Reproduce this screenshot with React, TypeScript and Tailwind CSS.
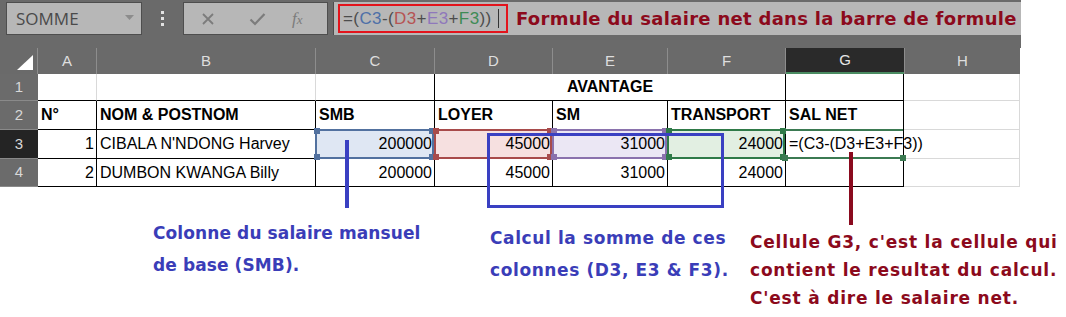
import React from "react";

const comic = "font-['DejaVu_Sans',sans-serif] font-bold whitespace-nowrap";

function Handles({ bg }: { bg: string }) {
  return (
    <>
      <span className={`absolute -left-[3px] -top-[3px] h-[6px] w-[6px] ${bg}`} />
      <span className={`absolute -right-[3px] -top-[3px] h-[6px] w-[6px] ${bg}`} />
      <span className={`absolute -left-[3px] -bottom-[3px] h-[6px] w-[6px] ${bg}`} />
      <span className={`absolute -right-[3px] -bottom-[3px] h-[6px] w-[6px] ${bg}`} />
    </>
  );
}

function ColHead({ label, last }: { label: string; last?: boolean }) {
  return (
    <div
      className={`flex items-center justify-center text-[15px] text-[#dedede] ${
        last ? "" : "border-r border-[#8d8d8d]"
      }`}
    >
      {label}
    </div>
  );
}

function RowHead({ label, active }: { label: string; active?: boolean }) {
  return (
    <div
      className={`flex items-center justify-center border-b border-[#8a8a8a] text-[15px] text-[#d8d8d8] ${
        active ? "bg-[#242424]" : "bg-[#6b6b6b]"
      }`}
    >
      {label}
    </div>
  );
}

const blk = "border-r border-b border-black";
const num = "flex items-center justify-end pr-[2px] whitespace-nowrap";
const txt = "flex items-center pl-[3px] whitespace-nowrap";

export default function App() {
  return (
    <div className="relative h-[317px] w-[1066px] overflow-hidden bg-white font-['Liberation_Sans',Arial,sans-serif] text-black">
      {/* Top gray zone */}
      <div className="w-[1021px] bg-[#6a6a6a]">
        {/* Toolbar */}
        <div className="flex h-[48px] items-start pt-[2px]">
          <div className="relative ml-[6px] flex h-[33px] w-[136px] items-center border border-[#4e4e4e] bg-[#b7b7b7] pl-[9px] font-['Open_Sans',sans-serif] text-[17px] text-[#4a4a4a]">
            SOMME
            <svg className="absolute left-[118px] top-[12px]" width="9" height="6" viewBox="0 0 9 6">
              <polygon points="0,0 9,0 4.5,5" fill="#8c8c8c" />
            </svg>
          </div>
          <div className="flex h-[33px] w-[41px] flex-col items-center justify-center gap-[3px]">
            <span className="h-[3px] w-[3px] bg-[#e2e2e2]" />
            <span className="h-[3px] w-[3px] bg-[#e2e2e2]" />
            <span className="h-[3px] w-[3px] bg-[#e2e2e2]" />
          </div>
          <div className="flex h-[33px] w-[145px] items-center border border-[#4e4e4e] bg-[#b7b7b7]">
            <svg className="ml-[17px]" width="14" height="14" viewBox="0 0 14 14">
              <path d="M2 2 L12 12 M12 2 L2 12" stroke="#7c7c7c" strokeWidth="1.8" />
            </svg>
            <svg className="ml-[34px]" width="17" height="14" viewBox="0 0 17 14">
              <path d="M1.5 7.5 L6 12 L15.5 2" stroke="#7c7c7c" strokeWidth="2.2" fill="none" />
            </svg>
            <span className="ml-[26px] font-['Liberation_Serif',serif] text-[17px] italic text-[#7c7c7c]">
              f<span className="text-[13px]">x</span>
            </span>
          </div>
          <div className="ml-[5px] flex h-[33px] w-[688px] items-center border-l border-[#4e4e4e] bg-[#b7b7b7]">
            <div className="ml-[4px] flex h-[29px] w-[170px] items-center border-2 border-[#e3141c] pl-[3px] text-[17px] tracking-[0.4px] text-[#4c4c4c]">
              <span>=(</span>
              <span className="text-[#4e70a8]">C3</span>
              <span>-(</span>
              <span className="text-[#b65353]">D3</span>
              <span>+</span>
              <span className="text-[#8f78bb]">E3</span>
              <span>+</span>
              <span className="text-[#3e8b55]">F3</span>
              <span>))</span>
              <span className="ml-[6px] h-[19px] w-[1px] bg-[#333]" />
            </div>
            <span className={`${comic} ml-[8px] text-[18px] tracking-[0.3px] text-[#8c0a1c]`}>
              Formule du salaire net dans la barre de formule
            </span>
          </div>
        </div>
      </div>

      {/* Grid */}
      <div className="grid w-[1021px] grid-cols-[38px_59px_219px_119px_118px_115px_118px_118px_116px] grid-rows-[26px_27px_29px_29px_28px] text-[16px]">
        {/* Header row */}
        <div className="relative border-r border-[#8d8d8d] bg-[#6a6a6a]">
          <svg className="absolute left-[17px] top-[7px]" width="17" height="16" viewBox="0 0 17 16">
            <polygon points="16,0 16,15 0,15" fill="#ffffff" />
          </svg>
        </div>
        <div className="col-span-6 grid grid-cols-[59px_219px_119px_118px_115px_118px] bg-[#6a6a6a]">
          <ColHead label="A" />
          <ColHead label="B" />
          <ColHead label="C" />
          <ColHead label="D" />
          <ColHead label="E" />
          <ColHead label="F" />
        </div>
        <div className="flex items-center justify-center border-b-2 border-[#4a8c62] bg-[#2a2a2a] text-[15px] text-[#e6e6e6]">
          G
        </div>
        <div className="flex items-center justify-center border-l border-[#8d8d8d] bg-[#6a6a6a] text-[15px] text-[#dedede]">
          H
        </div>

        {/* Row 1 */}
        <RowHead label="1" />
        <div className="border-r border-b border-r-[#d9d9d9] border-b-black" />
        <div className="border-r border-b border-r-[#d9d9d9] border-b-black" />
        <div className={blk} />
        <div className={`${blk} col-span-3 flex items-center justify-center font-bold`}>AVANTAGE</div>
        <div className={blk} />
        <div className="border-r border-b border-[#d9d9d9]" />

        {/* Row 2 */}
        <RowHead label="2" />
        <div className={`${blk} ${txt} font-bold`}>N°</div>
        <div className={`${blk} ${txt} font-bold`}>NOM &amp; POSTNOM</div>
        <div className={`${blk} ${txt} font-bold`}>SMB</div>
        <div className={`${blk} ${txt} font-bold`}>LOYER</div>
        <div className={`${blk} ${txt} font-bold`}>SM</div>
        <div className={`${blk} ${txt} font-bold`}>TRANSPORT</div>
        <div className={`${blk} ${txt} font-bold`}>SAL NET</div>
        <div className="border-r border-b border-[#d9d9d9]" />

        {/* Row 3 */}
        <RowHead label="3" active />
        <div className={`${blk} ${num}`}>1</div>
        <div className={`${blk} ${txt}`}>CIBALA N'NDONG Harvey</div>
        <div className={`${blk} ${num} relative bg-[#dfe7f3]`}>
          <div className="absolute -left-[1px] -top-[1px] bottom-[-1px] right-0 border-2 border-[#52719f]">
            <Handles bg="bg-[#52719f]" />
          </div>
          <span className="relative">200000</span>
        </div>
        <div className={`${blk} ${num} relative bg-[#f6e0e0]`}>
          <div className="absolute -left-[1px] -top-[1px] bottom-[-1px] right-0 border-2 border-[#a84b4b]">
            <Handles bg="bg-[#a84b4b]" />
          </div>
          <span className="relative">45000</span>
        </div>
        <div className={`${blk} ${num} relative bg-[#ebe7f4]`}>
          <div className="absolute -left-[1px] -top-[1px] bottom-[-1px] right-0 border-2 border-[#8a72ad]">
            <Handles bg="bg-[#8a72ad]" />
          </div>
          <span className="relative">31000</span>
        </div>
        <div className={`${blk} ${num} relative bg-[#e2efe2]`}>
          <div className="absolute -left-[1px] -top-[1px] bottom-[-1px] right-0 border-2 border-[#2f7a48]">
            <Handles bg="bg-[#2f7a48]" />
          </div>
          <span className="relative">24000</span>
        </div>
        <div className={`${blk} ${txt} relative`}>
          <div className="absolute -left-[1px] -top-[1px] bottom-[-1px] right-0 border-y-2 border-[#3b7a52]">
            <span className="absolute -left-[3px] -bottom-[4px] h-[6px] w-[6px] bg-[#3b7a52]" />
            <span className="absolute -right-[3px] -bottom-[4px] h-[6px] w-[6px] bg-[#3b7a52]" />
          </div>
          <span className="relative">=(C3-(D3+E3+F3))</span>
        </div>
        <div className="border-r border-b border-[#d9d9d9]" />

        {/* Row 4 */}
        <RowHead label="4" />
        <div className={`${blk} ${num}`}>2</div>
        <div className={`${blk} ${txt}`}>DUMBON KWANGA Billy</div>
        <div className={`${blk} ${num}`}>200000</div>
        <div className={`${blk} ${num}`}>45000</div>
        <div className={`${blk} ${num}`}>31000</div>
        <div className={`${blk} ${num}`}>24000</div>
        <div className={blk} />
        <div className="border-r border-b border-[#d9d9d9]" />
      </div>

      {/* Annotation texts */}
      <div className="flex items-start">
        <div className={`${comic} ml-[153px] mt-[30px] w-[337px] text-[17px] leading-[32px] tracking-[0.1px] text-[#3a3db8]`}>
          <div>Colonne du salaire mansuel</div>
          <div>de base (SMB).</div>
        </div>
        <div className={`${comic} mt-[35px] w-[260px] text-[17px] leading-[32px] tracking-[0.6px] text-[#3a3db8]`}>
          <div>Calcul la somme de ces</div>
          <div>colonnes (D3, E3 &amp; F3).</div>
        </div>
        <div className={`${comic} mt-[41px] text-[17px] leading-[28px] tracking-[0.8px] text-[#8c0a1c]`}>
          <div>Cellule G3, c'est la cellule qui</div>
          <div>contient le resultat du calcul.</div>
          <div>C'est à dire le salaire net.</div>
        </div>
      </div>

      {/* Overlay annotation marks */}
      <div className="absolute left-[345px] top-[140px] h-[68px] w-[4px] bg-[#3a40c2]" />
      <div className="absolute left-[487px] top-[133px] h-[75px] w-[237px] border-[3px] border-[#3a40c2]" />
      <div className="absolute left-[849px] top-[152px] h-[73px] w-[4px] bg-[#8a0a1e]" />
    </div>
  );
}
